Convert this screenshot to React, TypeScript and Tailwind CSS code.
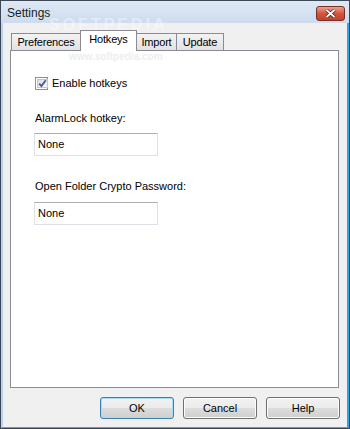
import { useState } from 'react';

const tabs = [
  { label: 'Preferences', w: 'w-[70px]' },
  { label: 'Hotkeys', w: 'w-[57px]' },
  { label: 'Import', w: 'w-[41px]' },
  { label: 'Update', w: 'w-[48px]' },
];

function CheckBox({ checked, onToggle }: { checked: boolean; onToggle: () => void }) {
  return (
    <button
      onClick={onToggle}
      className="w-[13px] h-[13px] border border-[#8e8f8f] bg-white p-[1px] flex"
    >
      <span className="flex-1 flex items-center justify-center bg-gradient-to-br from-[#dcdcdc] to-[#fbfbfb] border border-[#c6c6c6]">
        {checked && (
          <svg width="9" height="9" viewBox="0 0 9 9" className="overflow-visible">
            <path d="M1.2 4.6 L3.4 7 L7.8 1.3" fill="none" stroke="#3d5a96" strokeWidth="1.8" />
          </svg>
        )}
      </span>
    </button>
  );
}

function TextBox({ value }: { value: string }) {
  return (
    <div className="w-[124px] h-[23px] bg-white border border-[#dde1e7] border-t-[#abadb3] flex items-center pl-[3px]">
      {value}
    </div>
  );
}

function DialogButton({ label, primary }: { label: string; primary?: boolean }) {
  return (
    <button
      className={`w-[74px] h-[22px] rounded-[3px] border flex items-center justify-center bg-[linear-gradient(#f2f2f2_0%,#ebebeb_49%,#dddddd_50%,#cfcfcf_100%)] ${
        primary
          ? 'border-[#3c7fb1] shadow-[inset_0_0_0_1px_#a6dcf4]'
          : 'border-[#707070] shadow-[inset_0_0_0_1px_#fcfcfc]'
      }`}
    >
      {label}
    </button>
  );
}

export default function App() {
  const [active, setActive] = useState('Hotkeys');
  const [enabled, setEnabled] = useState(true);

  return (
    <div className="w-[350px] h-[429px] flex flex-col border border-[#3d4856] bg-[#c9dbef] font-['Liberation_Sans',Arial,sans-serif] text-[11px] text-black relative overflow-hidden">
      {/* Title bar */}
      <div className="h-[22px] flex items-center justify-between pl-[6px] pr-[4px] bg-gradient-to-b from-[#dfe9f5] to-[#cddcee]">
        <span className="text-[12px] text-[#1b1b1b] pt-[1px]">Settings</span>
        <button className="w-[29px] h-[15px] mt-[2px] rounded-[3px] border border-[#7a2f22] bg-gradient-to-b from-[#e8a394] via-[#d2553c] to-[#c0432b] flex items-center justify-center">
          <svg width="11" height="9" viewBox="0 0 11 9">
            <path d="M1.5 1 L9.5 8 M9.5 1 L1.5 8" stroke="#4a1a12" strokeWidth="3.2" />
            <path d="M1.5 1 L9.5 8 M9.5 1 L1.5 8" stroke="#ffffff" strokeWidth="1.8" />
          </svg>
        </button>
      </div>

      {/* Client area */}
      <div className="flex-1 flex flex-col bg-[#f0f0f0] border-l-2 border-l-[#bcd2ec] border-r-2 border-r-[#2ba6e0] border-b border-b-[#4aa3dd] pt-[7px] pl-[7px] pr-[8px]">
        {/* Tabs */}
        <div className="h-[20px] flex items-end pl-[1px] relative z-10">
          {tabs.map((t, i) => {
            const sel = t.label === active;
            return (
              <button
                key={t.label}
                onClick={() => setActive(t.label)}
                className={`${t.w} border border-[#898c95] border-b-0 flex items-center justify-center tracking-[-0.2px] ${
                  i > 0 ? 'ml-[-1px]' : ''
                } ${
                  sel
                    ? 'h-[21px] mb-[-1px] bg-white relative z-10 pb-[3px]'
                    : 'h-[17px] bg-gradient-to-b from-[#f3f3f3] to-[#e2e2e2]'
                }`}
              >
                {t.label}
              </button>
            );
          })}
        </div>

        {/* Panel */}
        <div className="h-[338px] bg-white border border-[#898c95] flex flex-col pl-[23px]">
          <div className="mt-[26px] flex items-center gap-[4px] pl-[1px] h-[13px]">
            <CheckBox checked={enabled} onToggle={() => setEnabled(!enabled)} />
            <span>Enable hotkeys</span>
          </div>

          <div className="mt-[22px] pl-[1px] h-[13px] leading-[13px]">AlarmLock hotkey:</div>
          <div className="mt-[8px]">
            <TextBox value="None" />
          </div>

          <div className="mt-[24px] pl-[1px] h-[13px] leading-[13px]">Open Folder Crypto Password:</div>
          <div className="mt-[9px]">
            <TextBox value="None" />
          </div>
        </div>

        {/* Buttons */}
        <div className="mt-[9px] flex justify-end gap-[9px] mr-[-1px]">
          <DialogButton label="OK" primary />
          <DialogButton label="Cancel" />
          <DialogButton label="Help" />
        </div>
      </div>

      {/* Watermarks */}
      <div className="absolute left-[48px] top-[17px] text-[16px] leading-[14px] font-bold tracking-[3px] text-white/40 pointer-events-none">
        SOFTPEDIA
      </div>
      <div className="absolute left-[68px] top-[51px] text-[10px] leading-[10px] font-bold text-[#e6e6e6]/70 pointer-events-none">
        www.softpedia.com
      </div>
    </div>
  );
}
